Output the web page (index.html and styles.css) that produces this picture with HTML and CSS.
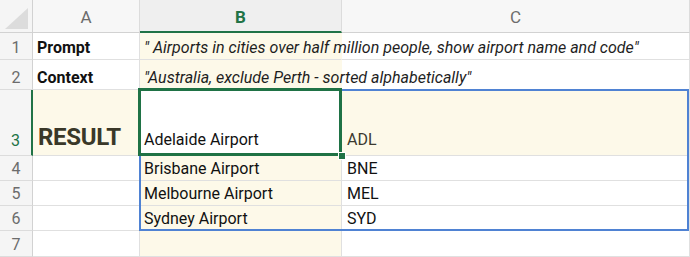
FILE: index.html
```html
<!DOCTYPE html>
<html>
<head>
<meta charset="utf-8">
<link rel="stylesheet" href="styles.css">
</head>
<body>
<div class="sheet">
  <div class="corner"><svg class="tri" width="24" height="22" viewBox="0 0 24 22"><polygon points="0,21 23,21 23,0" fill="#dcdcdc"/></svg></div>
  <div class="colhead">A</div>
  <div class="colhead active">B</div>
  <div class="colhead">C</div>

  <div class="rowhead">1</div>
  <div class="cell bold">Prompt</div>
  <div class="cell hl overflow ital">" Airports in cities over half million people, show airport name and code"</div>
  <div class="cell"></div>

  <div class="rowhead">2</div>
  <div class="cell bold">Context</div>
  <div class="cell hl overflow ital">"Australia, exclude Perth - sorted alphabetically"</div>
  <div class="cell"></div>

  <div class="rowhead active">3</div>
  <div class="cell hl tall result">RESULT</div>
  <div class="cell tall">Adelaide Airport</div>
  <div class="cell hl tall code muted">ADL</div>

  <div class="rowhead">4</div>
  <div class="cell"></div>
  <div class="cell hl">Brisbane Airport</div>
  <div class="cell code">BNE</div>

  <div class="rowhead">5</div>
  <div class="cell"></div>
  <div class="cell hl">Melbourne Airport</div>
  <div class="cell code">MEL</div>

  <div class="rowhead">6</div>
  <div class="cell"></div>
  <div class="cell hl">Sydney Airport</div>
  <div class="cell code">SYD</div>

  <div class="rowhead">7</div>
  <div class="cell"></div>
  <div class="cell hl"></div>
  <div class="cell"></div>

  <div class="range"></div>
  <div class="selection"></div>
  <div class="handle"></div>
</div>
</body>
</html>
```
FILE: styles.css
```css
* { box-sizing: border-box; }
html, body { margin: 0; padding: 0; background: #ffffff; }
body { width: 690px; height: 257px; overflow: hidden; font-family: Roboto, "Open Sans", sans-serif; }

.sheet {
  position: relative;
  display: grid;
  grid-template-columns: 33px 107px 202px 348px;
  grid-template-rows: 33px 27px 30px 66px 25px 25px 25px 26px;
  width: 690px;
  height: 257px;
}

.corner {
  background: #f5f5f5;
  border-right: 1px solid #d2d2d2;
  border-bottom: 1px solid #d2d2d2;
  display: flex;
  align-items: flex-end;
  justify-content: flex-end;
  padding: 0 3px 2px 0;
}
.tri { display: block; }

.colhead {
  background: #f7f7f7;
  border-right: 1px solid #dcdcdc;
  border-bottom: 1px solid #d2d2d2;
  color: #6c6c6c;
  font-size: 17px;
  display: flex;
  align-items: center;
  justify-content: center;
  padding-top: 2px;
}
.colhead.active {
  background: #efefef;
  color: #217346;
  font-weight: 700;
  border-bottom: 2px solid #217346;
}

.rowhead {
  background: #f5f5f5;
  border-right: 1px solid #d2d2d2;
  border-bottom: 1px solid #dcdcdc;
  color: #6c6c6c;
  font-size: 16px;
  line-height: 20px;
  display: flex;
  align-items: flex-end;
  justify-content: center;
  padding-bottom: 1px;
}
.rowhead.active {
  color: #217346;
  border-right: 2px solid #217346;
  padding-bottom: 4px;
}

.cell {
  background: #ffffff;
  border-right: 1px solid #e0e0e0;
  border-bottom: 1px solid #e0e0e0;
  color: #111111;
  font-size: 16px;
  line-height: 20px;
  display: flex;
  align-items: flex-end;
  padding: 0 0 1px 4px;
  white-space: nowrap;
}
.cell.hl { background: #fdf9e9; }
.cell.code { padding-left: 5px; }
.cell.overflow { overflow: visible; position: relative; z-index: 1; border-right-color: transparent; }
.cell.bold { font-weight: 700; }
.cell.ital { font-style: italic; color: #1e1e1e; }
.cell.tall { padding-bottom: 5px; }
.cell.result {
  font-size: 24px;
  line-height: 24px;
  font-weight: 700;
  color: #3a3828;
  padding-left: 5px;
  padding-bottom: 6px;
  letter-spacing: -0.3px;
}
.cell.muted { color: #3c3a30; }

.range {
  position: absolute;
  left: 139px;
  top: 89px;
  width: 550px;
  height: 142px;
  border: 2px solid #4f82d3;
  pointer-events: none;
  z-index: 2;
}
.selection {
  position: absolute;
  left: 138px;
  top: 88px;
  width: 204px;
  height: 68px;
  border: 3px solid #1f7245;
  z-index: 3;
}
.handle {
  position: absolute;
  left: 338px;
  top: 152px;
  width: 8px;
  height: 8px;
  background: #1f7245;
  border: 1px solid #ffffff;
  z-index: 4;
}
```
